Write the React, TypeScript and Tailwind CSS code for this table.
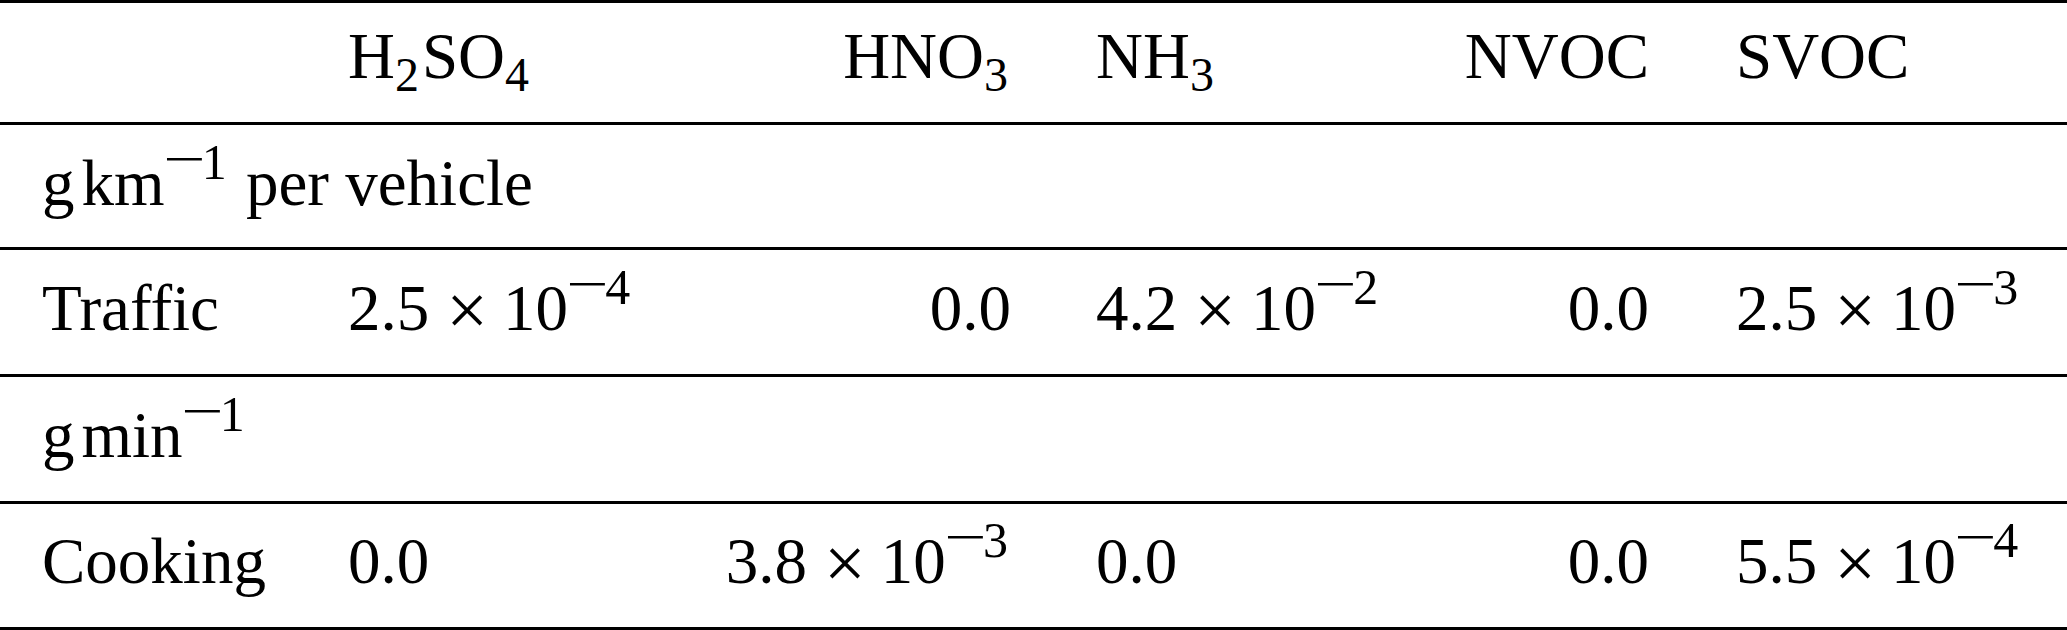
import React from "react";

const Minus = () => (
  <span className="inline-block leading-[0] scale-x-[1.5] -translate-y-[3px] ml-[5px] mr-[4px]">−</span>
);

const Sup = ({ children }: { children: React.ReactNode }) => (
  <span className="text-[50px] leading-[0] align-[26px] mr-[3px]">
    <Minus />
    {children}
  </span>
);

const Sub = ({ children }: { children: React.ReactNode }) => (
  <span className="text-[48px] leading-[0] align-[-13px] mr-[3px]">{children}</span>
);

const Sci = ({ m, e }: { m: string; e: string }) => (
  <span>
    {m}
    <span className="text-[74px] leading-[0] align-[-5px] ml-[17px] mr-[15px]">×</span>
    10
    <Sup>{e}</Sup>
  </span>
);

const cols = "grid grid-cols-[348px_332px_374px_343px_295px_1fr]";

const L0 = "pl-[42px] whitespace-nowrap";
const L = "whitespace-nowrap";
const R = "text-right pr-[43px] whitespace-nowrap";
const L4 = "pl-[42px] whitespace-nowrap";
const L6 = "pl-[44px] whitespace-nowrap";

export default function App() {
  return (
    <div className="w-[2067px] h-[630px] bg-white text-black font-['Liberation_Serif',serif] text-[65px] leading-none">
      {/* header */}
      <div className={`${cols} h-[122px] border-t-[3px] border-black pt-[21px]`}>
        <div className={L0}></div>
        <div className={L}>
          H<Sub>2</Sub>SO<Sub>4</Sub>
        </div>
        <div className={R}>
          HNO<Sub>3</Sub>
        </div>
        <div className={L4}>
          NH<Sub>3</Sub>
        </div>
        <div className={R}>NVOC</div>
        <div className={L6}>SVOC</div>
      </div>

      {/* unit row 1 */}
      <div className="h-[125px] border-t-[3px] border-black pt-[26px]">
        <div className={L0}>
          g<span className="ml-[7px]">km</span>
          <Sup>1</Sup> per vehicle
        </div>
      </div>

      {/* Traffic */}
      <div className={`${cols} h-[127px] border-t-[3px] border-black pt-[26px]`}>
        <div className={L0}>Traffic</div>
        <div className={L}>
          <Sci m="2.5" e="4" />
        </div>
        <div className={R}>0.0</div>
        <div className={L4}>
          <Sci m="4.2" e="2" />
        </div>
        <div className={R}>0.0</div>
        <div className={L6}>
          <Sci m="2.5" e="3" />
        </div>
      </div>

      {/* unit row 2 */}
      <div className="h-[127px] border-t-[3px] border-black pt-[26px]">
        <div className={L0}>
          g<span className="ml-[7px]">min</span>
          <Sup>1</Sup>
        </div>
      </div>

      {/* Cooking */}
      <div className={`${cols} h-[129px] border-t-[3px] border-b-[3px] border-black pt-[25px]`}>
        <div className={L0}>Cooking</div>
        <div className={L}>0.0</div>
        <div className={R}>
          <Sci m="3.8" e="3" />
        </div>
        <div className={L4}>0.0</div>
        <div className={R}>0.0</div>
        <div className={L6}>
          <Sci m="5.5" e="4" />
        </div>
      </div>
    </div>
  );
}
